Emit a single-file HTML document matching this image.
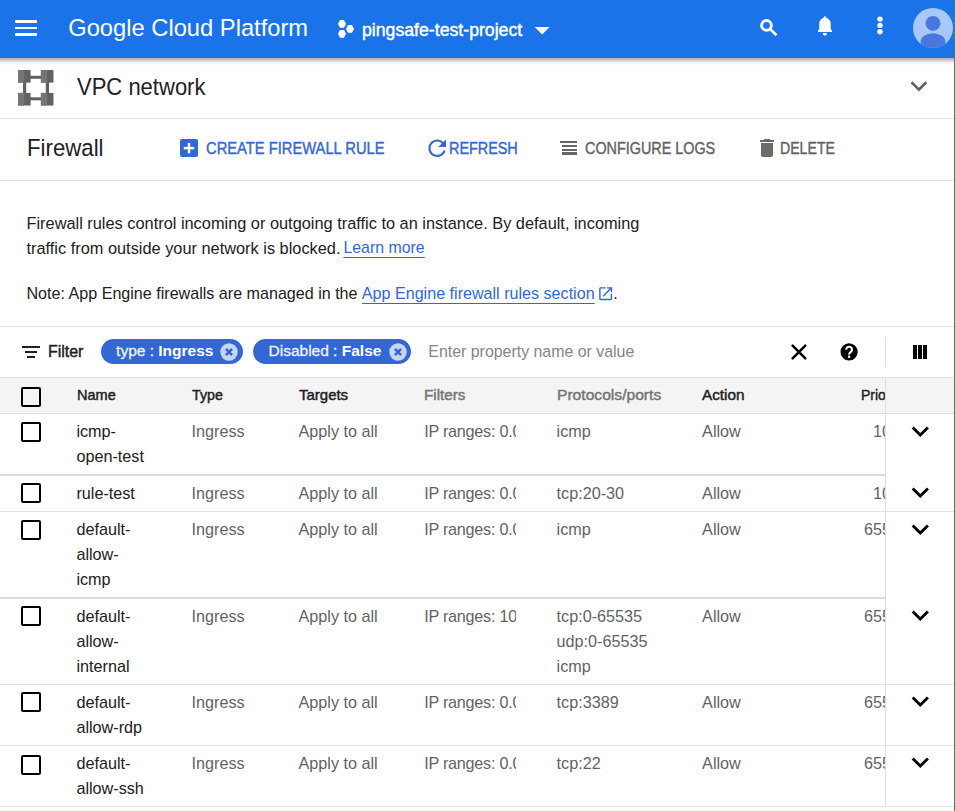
<!DOCTYPE html>
<html><head><meta charset="utf-8"><style>
html,body{margin:0;padding:0;background:#fff;width:955px;height:811px;overflow:hidden;}
body{position:relative;font-family:"Liberation Sans",sans-serif;}
.t{position:absolute;white-space:nowrap;}
.r{position:absolute;}
svg.r{overflow:visible}
</style></head><body>
<div class="r" style="left:0px;top:0px;width:955px;height:58px;background:#1a73e8;"></div>
<div class="r" style="left:0px;top:58px;width:955px;height:1px;background:rgba(0,0,0,0.27);"></div>
<div class="r" style="left:0px;top:59px;width:955px;height:1px;background:rgba(0,0,0,0.25);"></div>
<div class="r" style="left:0px;top:60px;width:955px;height:1px;background:rgba(0,0,0,0.18);"></div>
<div class="r" style="left:0px;top:61px;width:955px;height:1px;background:rgba(0,0,0,0.11);"></div>
<div class="r" style="left:0px;top:62px;width:955px;height:1px;background:rgba(0,0,0,0.06);"></div>
<div class="r" style="left:0px;top:63px;width:955px;height:1px;background:rgba(0,0,0,0.03);"></div>
<div class="r" style="left:0px;top:64px;width:955px;height:1px;background:rgba(0,0,0,0.013);"></div>
<div class="r" style="left:0px;top:65px;width:955px;height:1px;background:rgba(0,0,0,0.005);"></div>
<div class="r" style="left:14.8px;top:20.3px;width:22.4px;height:2.5px;background:#fff;"></div>
<div class="r" style="left:14.8px;top:26.6px;width:22.4px;height:2.5px;background:#fff;"></div>
<div class="r" style="left:14.8px;top:33.0px;width:22.4px;height:2.5px;background:#fff;"></div>
<div class="t" style="left:68.2px;top:11.58px;font-size:23.72px;line-height:33px;color:#fff;font-weight:400;">Google Cloud Platform</div>
<svg class="r" style="left:0;top:0" width="955" height="58"><polygon fill="#fff" points="338,23.9 340,20.0 344,20.0 346,23.9 344,27.799999999999997 340,27.799999999999997"/><polygon fill="#fff" points="346,28.9 348,25.0 352,25.0 354,28.9 352,32.8 348,32.8"/><polygon fill="#fff" points="338,33.8 340,29.9 344,29.9 346,33.8 344,37.699999999999996 340,37.699999999999996"/><polygon fill="#fff" points="534.7,26.9 549.6,26.9 542.15,34.6"/><circle cx="766.5" cy="25.4" r="4.85" fill="none" stroke="#fff" stroke-width="2.9"/><line x1="770.2" y1="29.1" x2="776.5" y2="35.2" stroke="#fff" stroke-width="2.7"/><path fill="#fff" d="M825 16.2a1.2 1.2 0 0 1 1.2 1.2v0.3c2.6 0.8 4.5 3 4.5 5.6v5.6l1.3 1.5v1.5h-14v-1.5l1.3-1.5v-5.6c0-2.6 1.9-4.8 4.5-5.6v-0.3a1.2 1.2 0 0 1 1.2-1.2z"/><path fill="#fff" d="M822.9 33h4a2 2.8 0 0 1 -4 0z"/><circle cx="880" cy="19.1" r="2.7" fill="#fff"/><circle cx="880" cy="25.4" r="2.7" fill="#fff"/><circle cx="880" cy="31.8" r="2.7" fill="#fff"/><defs><clipPath id="av"><circle cx="933" cy="28" r="20"/></clipPath></defs><circle cx="933" cy="28" r="20" fill="#a8c7fa"/><g clip-path="url(#av)"><circle cx="933" cy="23.3" r="7.4" fill="#4a76e0"/><ellipse cx="933" cy="42" rx="12.4" ry="8.7" fill="#4a76e0"/></g></svg>
<div class="t" style="left:361.9px;top:16.32px;font-size:19px;line-height:27px;color:#fff;font-weight:400;transform:scale(0.9306173094819563,1.0);transform-origin:0 20.08px;-webkit-text-stroke:0.45px #fff;">pingsafe-test-project</div>
<svg class="r" style="left:18.4px;top:70.2px" width="36" height="36" viewBox="0 0 36 36"><rect x="5" y="6" width="3.2" height="24" fill="#616161"/><rect x="27.8" y="6" width="3.2" height="24" fill="#616161"/><rect x="6" y="5.8" width="24" height="3" fill="#616161"/><rect x="6" y="27.3" width="24" height="3" fill="#616161"/><rect x="0" y="0" width="12.6" height="12.6" fill="#616161"/><rect x="0" y="0" width="6.3" height="12.6" fill="#757575"/><rect x="22.9" y="0" width="12.6" height="12.6" fill="#616161"/><rect x="22.9" y="0" width="6.3" height="12.6" fill="#757575"/><rect x="0" y="22.9" width="12.6" height="12.6" fill="#616161"/><rect x="0" y="22.9" width="6.3" height="12.6" fill="#757575"/><rect x="22.9" y="22.9" width="12.6" height="12.6" fill="#616161"/><rect x="22.9" y="22.9" width="6.3" height="12.6" fill="#757575"/></svg>
<div class="t" style="left:76.6px;top:70.82px;font-size:23.6px;line-height:33px;color:#202124;font-weight:400;transform:scale(0.933,1.0);transform-origin:0 24.68px;">VPC network</div>
<svg class="r" style="left:905px;top:76px" width="30" height="20"><polyline points="6.5,6.3 13.9,13.6 21.3,6.3" fill="none" stroke="#5f6368" stroke-width="2.6"/></svg>
<div class="r" style="left:0px;top:118px;width:954px;height:1px;background:#e0e0e0;"></div>
<div class="t" style="left:27.1px;top:131.02px;font-size:23.9px;line-height:33px;color:#202124;font-weight:400;transform:scale(0.93,1.0);transform-origin:0 24.78px;">Firewall</div>
<svg class="r" style="left:180.4px;top:138.5px" width="18" height="18"><rect x="0" y="0" width="18" height="18" rx="2" fill="#3367d6"/><rect x="3.8" y="7.9" width="10.4" height="2.4" fill="#fff"/><rect x="7.8" y="3.9" width="2.4" height="10.4" fill="#fff"/></svg>
<div class="t" style="left:206.3px;top:136.65px;font-size:16.3px;line-height:23px;color:#3367d6;font-weight:400;transform:scale(0.9041720714293914,1.0);transform-origin:0 17.15px;-webkit-text-stroke:0.4px #3367d6;">CREATE FIREWALL RULE</div>
<svg class="r" style="left:423.8px;top:135px" width="26.4" height="26.4" viewBox="0 0 24 24"><path fill="#3367d6" d="M17.65 6.35C16.2 4.9 14.21 4 12 4c-4.42 0-7.99 3.58-7.99 8s3.57 8 7.99 8c3.73 0 6.84-2.55 7.73-6h-2.08c-.82 2.33-3.04 4-5.65 4-3.31 0-6-2.69-6-6s2.69-6 6-6c1.66 0 3.14.69 4.22 1.78L13 11h7V4l-2.35 2.35z"/></svg>
<div class="t" style="left:448.6px;top:136.65px;font-size:16.3px;line-height:23px;color:#3367d6;font-weight:400;transform:scale(0.8833205457277584,1.0);transform-origin:0 17.15px;-webkit-text-stroke:0.4px #3367d6;">REFRESH</div>
<div class="r" style="left:559.6px;top:141px;width:17.899999999999977px;height:2.1999999999999886px;background:#666;"></div>
<div class="r" style="left:562.1px;top:145px;width:15.399999999999977px;height:2px;background:#666;"></div>
<div class="r" style="left:562.1px;top:148.8px;width:15.399999999999977px;height:2.0px;background:#666;"></div>
<div class="r" style="left:562.1px;top:152.3px;width:15.399999999999977px;height:2.299999999999983px;background:#666;"></div>
<div class="t" style="left:585.2px;top:136.75px;font-size:16.3px;line-height:23px;color:#5f6368;font-weight:400;transform:scale(0.882646552350729,1.0);transform-origin:0 17.15px;-webkit-text-stroke:0.4px #5f6368;">CONFIGURE LOGS</div>
<svg class="r" style="left:755px;top:136.4px" width="24" height="24" viewBox="0 0 24 24"><path fill="#6b6b6b" d="M6 19c0 1.1.9 2 2 2h8c1.1 0 2-.9 2-2V7H6v12zM19 4h-3.5l-1-1h-5l-1 1H5v2h14V4z"/></svg>
<div class="t" style="left:779.9px;top:136.65px;font-size:16.3px;line-height:23px;color:#5f6368;font-weight:400;transform:scale(0.8673675206504436,1.0);transform-origin:0 17.15px;-webkit-text-stroke:0.4px #5f6368;">DELETE</div>
<div class="r" style="left:0px;top:180px;width:954px;height:1px;background:#e0e0e0;"></div>
<div class="t" style="left:26.5px;top:212.13px;font-size:16.35px;line-height:23px;color:#202124;font-weight:400;">Firewall rules control incoming or outgoing traffic to an instance. By default, incoming</div>
<div class="t" style="left:26.5px;top:236.63px;font-size:16.35px;line-height:23px;color:#202124;font-weight:400;">traffic from outside your network is blocked.</div>
<div class="t" style="left:343.4px;top:237.29px;font-size:15.9px;line-height:22px;color:#3367d6;font-weight:400;"><span style="text-decoration:underline;text-underline-offset:4px">Learn more</span></div>
<div class="t" style="left:26.5px;top:282.22px;font-size:16.1px;line-height:23px;color:#202124;font-weight:400;">Note: App Engine firewalls are managed in the </div>
<div class="t" style="left:361.8px;top:282.21px;font-size:16.12px;line-height:23px;color:#3367d6;font-weight:400;"><span style="text-decoration:underline;text-underline-offset:4px">App Engine firewall rules section</span></div>
<div class="t" style="left:613.2px;top:282.22px;font-size:16.1px;line-height:23px;color:#202124;font-weight:400;">.</div>
<svg class="r" style="left:596.8px;top:284.7px" width="17.3" height="17.3" viewBox="0 0 24 24"><path fill="#3367d6" d="M19 19H5V5h7V3H5c-1.11 0-2 .9-2 2v14c0 1.1.89 2 2 2h14c1.1 0 2-.9 2-2v-7h-2v7zM14 3v2h3.59l-9.83 9.83 1.41 1.41L19 6.41V10h2V3h-7z"/></svg>
<div class="r" style="left:0px;top:326px;width:954px;height:1px;background:#e0e0e0;"></div>
<div class="r" style="left:22.4px;top:345.9px;width:17.3px;height:2.2px;background:#202124;"></div>
<div class="r" style="left:25px;top:351.2px;width:12px;height:2.1px;background:#202124;"></div>
<div class="r" style="left:27.1px;top:355.9px;width:7.8px;height:2.0px;background:#202124;"></div>
<div class="t" style="left:48.3px;top:339.68px;font-size:16.5px;line-height:23px;color:#202124;font-weight:400;transform:scale(0.9654642000965464,1.0);transform-origin:0 17.22px;-webkit-text-stroke:0.45px #202124;">Filter</div>
<div class="r" style="left:101.2px;top:339.2px;width:141.5px;height:24.6px;background:#3367d6;border-radius:13px"></div>
<div class="t" style="left:116.1px;top:339.93px;font-size:15.5px;line-height:22.4px;color:#fff;white-space:nowrap;width:96.1px;overflow:visible"><span style="display:inline-block;transform-origin:0 50%;transform:none" class="chipt"><span style="color:#eef2fc;-webkit-text-stroke:0.3px #eef2fc">type : </span><b>Ingress</b></span></div>
<svg class="r" style="left:219.9px;top:342.9px" width="18" height="18"><circle cx="9" cy="9" r="8.7" fill="#c9d6f3"/><path d="M5.9 5.9L12.1 12.1M12.1 5.9L5.9 12.1" stroke="#3367d6" stroke-width="2.6"/></svg>
<div class="r" style="left:253.2px;top:339.2px;width:157.60000000000002px;height:24.6px;background:#3367d6;border-radius:13px"></div>
<div class="t" style="left:268.5px;top:339.93px;font-size:15.5px;line-height:22.4px;color:#fff;white-space:nowrap;width:113.0px;overflow:visible"><span style="display:inline-block;transform-origin:0 50%;transform:none" class="chipt"><span style="color:#eef2fc;-webkit-text-stroke:0.3px #eef2fc">Disabled : </span><b>False</b></span></div>
<svg class="r" style="left:388.6px;top:342.9px" width="18" height="18"><circle cx="9" cy="9" r="8.7" fill="#c9d6f3"/><path d="M5.9 5.9L12.1 12.1M12.1 5.9L5.9 12.1" stroke="#3367d6" stroke-width="2.6"/></svg>
<div class="t" style="left:428.3px;top:341.09px;font-size:15.91px;line-height:22px;color:#80868b;font-weight:400;">Enter property name or value</div>
<svg class="r" style="left:0;top:0" width="955" height="811"><path d="M792.6 345.6L805.3 358.3M805.3 345.6L792.6 358.3" stroke="#000" stroke-width="2.5" stroke-linecap="round"/></svg>
<svg class="r" style="left:0;top:0" width="955" height="811"><circle cx="849.1" cy="351.9" r="8.6" fill="#000"/><path d="M846.2 349.6a2.9 2.8 0 1 1 4.6 2.2c-1.1 0.8-1.7 1.3-1.7 2.6" fill="none" stroke="#fff" stroke-width="2.1"/><rect x="848" y="355.6" width="2.2" height="2.2" fill="#fff"/></svg>
<div class="r" style="left:884.5px;top:337.3px;width:1px;height:29.3px;background:#e0e0e0;"></div>
<div class="r" style="left:912.9px;top:345.2px;width:4.0px;height:13.8px;background:#000;"></div>
<div class="r" style="left:918.0px;top:345.2px;width:4.0px;height:13.8px;background:#000;"></div>
<div class="r" style="left:923.1px;top:345.2px;width:4.0px;height:13.8px;background:#000;"></div>
<div class="r" style="left:0px;top:377px;width:954px;height:1px;background:#e0e0e0;"></div>
<div class="r" style="left:0px;top:378px;width:954px;height:35px;background:#f4f4f4;"></div>
<div class="r" style="left:0px;top:413px;width:954px;height:1px;background:#e0e0e0;"></div>
<div class="r" style="left:21.1px;top:387.2px;width:15.8px;height:15.8px;border:2px solid #000;border-radius:2px"></div>
<div class="t" style="left:76.8px;top:384.00px;font-size:15px;line-height:21px;color:#202124;font-weight:400;transform:scale(0.9696969696969695,1.0);transform-origin:0 15.70px;-webkit-text-stroke:0.45px #202124;">Name</div>
<div class="t" style="left:192.4px;top:384.00px;font-size:15px;line-height:21px;color:#202124;font-weight:400;transform:scale(0.9471094710947109,1.0);transform-origin:0 15.70px;-webkit-text-stroke:0.45px #202124;">Type</div>
<div class="t" style="left:299.2px;top:384.00px;font-size:15px;line-height:21px;color:#202124;font-weight:400;transform:scale(0.9981500681018887,1.0);transform-origin:0 15.70px;-webkit-text-stroke:0.45px #202124;">Targets</div>
<div class="t" style="left:423.9px;top:384.00px;font-size:15px;line-height:21px;color:#757575;font-weight:400;transform:scale(1.0138858276394094,1.0);transform-origin:0 15.70px;-webkit-text-stroke:0.45px #757575;">Filters</div>
<div class="t" style="left:557.2px;top:384.00px;font-size:15px;line-height:21px;color:#757575;font-weight:400;transform:scale(1.0415573381312941,1.0);transform-origin:0 15.70px;-webkit-text-stroke:0.45px #757575;">Protocols/ports</div>
<div class="t" style="left:702.2px;top:384.00px;font-size:15px;line-height:21px;color:#202124;font-weight:400;transform:scale(1.0194046676740784,1.0);transform-origin:0 15.70px;-webkit-text-stroke:0.45px #202124;">Action</div>
<div class="r" style="left:0;top:378px;width:885px;height:35px;overflow:hidden"><div class="t" style="left:860.6px;top:6.00px;font-size:15px;line-height:21px;font-weight:400;-webkit-text-stroke:0.45px #202124;color:#202124;transform:scaleX(0.93);transform-origin:0 50%">Priority</div></div>
<div class="r" style="left:21.1px;top:422.3px;width:15.8px;height:15.8px;border:2px solid #000;border-radius:2px"></div>
<div class="t" style="left:76.4px;top:419.89px;font-size:16.2px;line-height:23px;color:#202124;font-weight:400;">icmp-</div>
<div class="t" style="left:76.4px;top:444.89px;font-size:16.2px;line-height:23px;color:#202124;font-weight:400;">open-test</div>
<div class="t" style="left:191.5px;top:419.89px;font-size:16.2px;line-height:23px;color:#5f6368;font-weight:400;">Ingress</div>
<div class="t" style="left:298.5px;top:419.89px;font-size:16.2px;line-height:23px;color:#5f6368;font-weight:400;">Apply to all</div>
<div class="r" style="left:0;top:414px;width:516px;height:30px;overflow:hidden"><div class="t" style="left:424.2px;top:4.89px;font-size:16.2px;line-height:25px;color:#5f6368;letter-spacing:-0.25px">IP ranges: 0.0.0.0/0</div></div>
<div class="t" style="left:556.6px;top:419.89px;font-size:16.2px;line-height:23px;color:#5f6368;font-weight:400;">icmp</div>
<div class="t" style="left:702.1px;top:419.89px;font-size:16.2px;line-height:23px;color:#5f6368;font-weight:400;">Allow</div>
<div class="r" style="left:0;top:414px;width:885px;height:30px;overflow:hidden"><div class="t" style="left:700px;width:209px;text-align:right;top:4.89px;font-size:16.2px;line-height:25px;color:#5f6368">1000</div></div>
<div class="r" style="left:0px;top:474px;width:885px;height:2px;background:#dcdcdc;"></div>
<svg class="r" style="left:903px;top:413.83px" width="34.6" height="34.6" viewBox="0 0 24 24"><path fill="#000" d="M16.59 8.59L12 13.17 7.41 8.59 6 10l6 6 6-6z"/></svg>
<div class="r" style="left:21.1px;top:483.3px;width:15.8px;height:15.8px;border:2px solid #000;border-radius:2px"></div>
<div class="t" style="left:76.4px;top:481.89px;font-size:16.2px;line-height:23px;color:#202124;font-weight:400;">rule-test</div>
<div class="t" style="left:191.5px;top:481.89px;font-size:16.2px;line-height:23px;color:#5f6368;font-weight:400;">Ingress</div>
<div class="t" style="left:298.5px;top:481.89px;font-size:16.2px;line-height:23px;color:#5f6368;font-weight:400;">Apply to all</div>
<div class="r" style="left:0;top:476px;width:516px;height:30px;overflow:hidden"><div class="t" style="left:424.2px;top:4.89px;font-size:16.2px;line-height:25px;color:#5f6368;letter-spacing:-0.25px">IP ranges: 0.0.0.0/0</div></div>
<div class="t" style="left:556.6px;top:481.89px;font-size:16.2px;line-height:23px;color:#5f6368;font-weight:400;">tcp:20-30</div>
<div class="t" style="left:702.1px;top:481.89px;font-size:16.2px;line-height:23px;color:#5f6368;font-weight:400;">Allow</div>
<div class="r" style="left:0;top:476px;width:885px;height:30px;overflow:hidden"><div class="t" style="left:700px;width:209px;text-align:right;top:4.89px;font-size:16.2px;line-height:25px;color:#5f6368">1000</div></div>
<div class="r" style="left:0px;top:511px;width:885px;height:1px;background:#e0e0e0;"></div>
<svg class="r" style="left:903px;top:475.03px" width="34.6" height="34.6" viewBox="0 0 24 24"><path fill="#000" d="M16.59 8.59L12 13.17 7.41 8.59 6 10l6 6 6-6z"/></svg>
<div class="r" style="left:21.1px;top:520.3px;width:15.8px;height:15.8px;border:2px solid #000;border-radius:2px"></div>
<div class="t" style="left:76.4px;top:517.89px;font-size:16.2px;line-height:23px;color:#202124;font-weight:400;">default-</div>
<div class="t" style="left:76.4px;top:542.89px;font-size:16.2px;line-height:23px;color:#202124;font-weight:400;">allow-</div>
<div class="t" style="left:76.4px;top:567.89px;font-size:16.2px;line-height:23px;color:#202124;font-weight:400;">icmp</div>
<div class="t" style="left:191.5px;top:517.89px;font-size:16.2px;line-height:23px;color:#5f6368;font-weight:400;">Ingress</div>
<div class="t" style="left:298.5px;top:517.89px;font-size:16.2px;line-height:23px;color:#5f6368;font-weight:400;">Apply to all</div>
<div class="r" style="left:0;top:512px;width:516px;height:30px;overflow:hidden"><div class="t" style="left:424.2px;top:4.89px;font-size:16.2px;line-height:25px;color:#5f6368;letter-spacing:-0.25px">IP ranges: 0.0.0.0/0</div></div>
<div class="t" style="left:556.6px;top:517.89px;font-size:16.2px;line-height:23px;color:#5f6368;font-weight:400;">icmp</div>
<div class="t" style="left:702.1px;top:517.89px;font-size:16.2px;line-height:23px;color:#5f6368;font-weight:400;">Allow</div>
<div class="r" style="left:0;top:512px;width:885px;height:30px;overflow:hidden"><div class="t" style="left:700px;width:209px;text-align:right;top:4.89px;font-size:16.2px;line-height:25px;color:#5f6368">65534</div></div>
<div class="r" style="left:0px;top:597px;width:885px;height:2px;background:#dcdcdc;"></div>
<svg class="r" style="left:903px;top:511.83px" width="34.6" height="34.6" viewBox="0 0 24 24"><path fill="#000" d="M16.59 8.59L12 13.17 7.41 8.59 6 10l6 6 6-6z"/></svg>
<div class="r" style="left:21.1px;top:606.3px;width:15.8px;height:15.8px;border:2px solid #000;border-radius:2px"></div>
<div class="t" style="left:76.4px;top:604.89px;font-size:16.2px;line-height:23px;color:#202124;font-weight:400;">default-</div>
<div class="t" style="left:76.4px;top:629.89px;font-size:16.2px;line-height:23px;color:#202124;font-weight:400;">allow-</div>
<div class="t" style="left:76.4px;top:654.89px;font-size:16.2px;line-height:23px;color:#202124;font-weight:400;">internal</div>
<div class="t" style="left:191.5px;top:604.89px;font-size:16.2px;line-height:23px;color:#5f6368;font-weight:400;">Ingress</div>
<div class="t" style="left:298.5px;top:604.89px;font-size:16.2px;line-height:23px;color:#5f6368;font-weight:400;">Apply to all</div>
<div class="r" style="left:0;top:599px;width:516px;height:30px;overflow:hidden"><div class="t" style="left:424.2px;top:4.89px;font-size:16.2px;line-height:25px;color:#5f6368;letter-spacing:-0.25px">IP ranges: 10.128.0.0/9</div></div>
<div class="t" style="left:556.6px;top:604.89px;font-size:16.2px;line-height:23px;color:#5f6368;font-weight:400;">tcp:0-65535</div>
<div class="t" style="left:556.6px;top:629.89px;font-size:16.2px;line-height:23px;color:#5f6368;font-weight:400;">udp:0-65535</div>
<div class="t" style="left:556.6px;top:654.89px;font-size:16.2px;line-height:23px;color:#5f6368;font-weight:400;">icmp</div>
<div class="t" style="left:702.1px;top:604.89px;font-size:16.2px;line-height:23px;color:#5f6368;font-weight:400;">Allow</div>
<div class="r" style="left:0;top:599px;width:885px;height:30px;overflow:hidden"><div class="t" style="left:700px;width:209px;text-align:right;top:4.89px;font-size:16.2px;line-height:25px;color:#5f6368">65534</div></div>
<div class="r" style="left:0px;top:684px;width:885px;height:1px;background:#e0e0e0;"></div>
<svg class="r" style="left:903px;top:597.83px" width="34.6" height="34.6" viewBox="0 0 24 24"><path fill="#000" d="M16.59 8.59L12 13.17 7.41 8.59 6 10l6 6 6-6z"/></svg>
<div class="r" style="left:21.1px;top:692.3px;width:15.8px;height:15.8px;border:2px solid #000;border-radius:2px"></div>
<div class="t" style="left:76.4px;top:690.89px;font-size:16.2px;line-height:23px;color:#202124;font-weight:400;">default-</div>
<div class="t" style="left:76.4px;top:715.89px;font-size:16.2px;line-height:23px;color:#202124;font-weight:400;">allow-rdp</div>
<div class="t" style="left:191.5px;top:690.89px;font-size:16.2px;line-height:23px;color:#5f6368;font-weight:400;">Ingress</div>
<div class="t" style="left:298.5px;top:690.89px;font-size:16.2px;line-height:23px;color:#5f6368;font-weight:400;">Apply to all</div>
<div class="r" style="left:0;top:685px;width:516px;height:30px;overflow:hidden"><div class="t" style="left:424.2px;top:4.89px;font-size:16.2px;line-height:25px;color:#5f6368;letter-spacing:-0.25px">IP ranges: 0.0.0.0/0</div></div>
<div class="t" style="left:556.6px;top:690.89px;font-size:16.2px;line-height:23px;color:#5f6368;font-weight:400;">tcp:3389</div>
<div class="t" style="left:702.1px;top:690.89px;font-size:16.2px;line-height:23px;color:#5f6368;font-weight:400;">Allow</div>
<div class="r" style="left:0;top:685px;width:885px;height:30px;overflow:hidden"><div class="t" style="left:700px;width:209px;text-align:right;top:4.89px;font-size:16.2px;line-height:25px;color:#5f6368">65534</div></div>
<div class="r" style="left:0px;top:745px;width:885px;height:1px;background:#e0e0e0;"></div>
<svg class="r" style="left:903px;top:684.03px" width="34.6" height="34.6" viewBox="0 0 24 24"><path fill="#000" d="M16.59 8.59L12 13.17 7.41 8.59 6 10l6 6 6-6z"/></svg>
<div class="r" style="left:21.1px;top:754.8px;width:15.8px;height:15.8px;border:2px solid #000;border-radius:2px"></div>
<div class="t" style="left:76.4px;top:751.89px;font-size:16.2px;line-height:23px;color:#202124;font-weight:400;">default-</div>
<div class="t" style="left:76.4px;top:776.89px;font-size:16.2px;line-height:23px;color:#202124;font-weight:400;">allow-ssh</div>
<div class="t" style="left:191.5px;top:751.89px;font-size:16.2px;line-height:23px;color:#5f6368;font-weight:400;">Ingress</div>
<div class="t" style="left:298.5px;top:751.89px;font-size:16.2px;line-height:23px;color:#5f6368;font-weight:400;">Apply to all</div>
<div class="r" style="left:0;top:746px;width:516px;height:30px;overflow:hidden"><div class="t" style="left:424.2px;top:4.89px;font-size:16.2px;line-height:25px;color:#5f6368;letter-spacing:-0.25px">IP ranges: 0.0.0.0/0</div></div>
<div class="t" style="left:556.6px;top:751.89px;font-size:16.2px;line-height:23px;color:#5f6368;font-weight:400;">tcp:22</div>
<div class="t" style="left:702.1px;top:751.89px;font-size:16.2px;line-height:23px;color:#5f6368;font-weight:400;">Allow</div>
<div class="r" style="left:0;top:746px;width:885px;height:30px;overflow:hidden"><div class="t" style="left:700px;width:209px;text-align:right;top:4.89px;font-size:16.2px;line-height:25px;color:#5f6368">65534</div></div>
<div class="r" style="left:0px;top:806px;width:885px;height:1px;background:#e0e0e0;"></div>
<svg class="r" style="left:903px;top:745.23px" width="34.6" height="34.6" viewBox="0 0 24 24"><path fill="#000" d="M16.59 8.59L12 13.17 7.41 8.59 6 10l6 6 6-6z"/></svg>
<div class="r" style="left:885px;top:511px;width:69px;height:1px;background:#e0e0e0;"></div>
<div class="r" style="left:885px;top:684px;width:69px;height:1px;background:#e0e0e0;"></div>
<div class="r" style="left:885px;top:745px;width:69px;height:1px;background:#e0e0e0;"></div>
<div class="r" style="left:885px;top:806px;width:69px;height:1px;background:#e0e0e0;"></div>
<div class="r" style="left:885px;top:378px;width:1px;height:35px;background:#e0e0e0;"></div>
<div class="r" style="left:885px;top:415px;width:1px;height:391px;background:#e0e0e0;"></div>
<div class="r" style="left:954px;top:0px;width:1px;height:811px;background:#6a6a6a;"></div>
</body></html>
